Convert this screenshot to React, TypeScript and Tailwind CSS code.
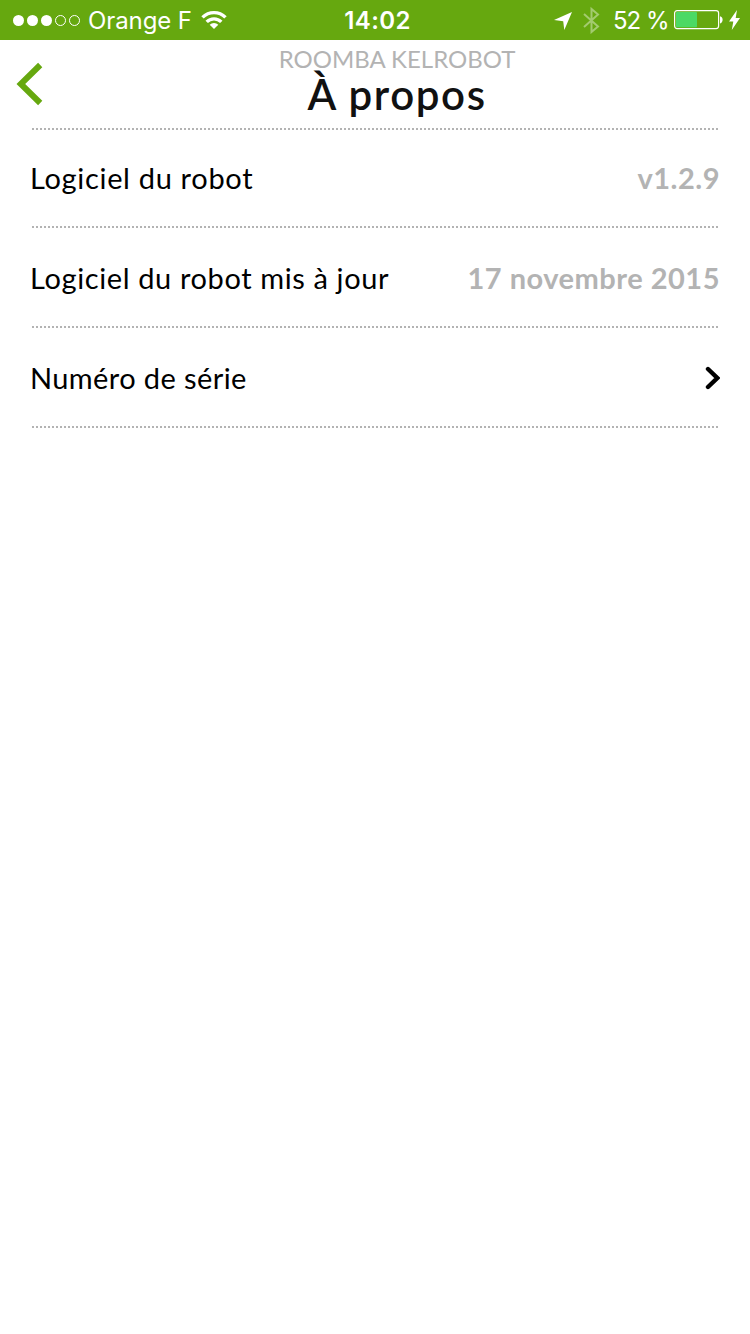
type Row = { label: string; labelClass: string; value?: string }

const rows: Row[] = [
  { label: 'Logiciel du robot', labelClass: 'tracking-[0.68px]', value: 'v1.2.9' },
  { label: 'Logiciel du robot mis à jour', labelClass: 'tracking-[0.62px]', value: '17 novembre 2015' },
  { label: 'Numéro de série', labelClass: 'tracking-[0.4px]' },
]

// 2px dots with 2px gaps; border-dotted would round them off
function Separator() {
  return (
    <div className="mx-8 h-0.5 bg-[repeating-linear-gradient(to_right,#b3b3b3_0px,#b3b3b3_2px,transparent_2px,transparent_4px)]" />
  )
}

function StatusBar() {
  return (
    <div className="grid h-10 grid-cols-[1fr_auto_1fr] items-center bg-[#66a80f] font-['Inter',sans-serif] text-2xl leading-9 whitespace-nowrap text-white">
      <div className="flex items-center pl-[13px]">
        <svg width="67" height="12" viewBox="0 0 67 12" fill="currentColor">
          <circle cx="5.5" cy="6.5" r="5.5" />
          <circle cx="19.5" cy="6.5" r="5.5" />
          <circle cx="33.5" cy="6.5" r="5.5" />
          <circle cx="47.5" cy="6.5" r="5" fill="none" stroke="currentColor" />
          <circle cx="61.5" cy="6.5" r="5" fill="none" stroke="currentColor" />
        </svg>
        <span className="ml-2 w-[104px] pt-0.5 tracking-[-0.1px]">Orange F</span>
        <svg className="ml-[9px]" width="26" height="20" viewBox="0 0 26 20" fill="none" stroke="currentColor" strokeWidth="3.4">
          <path d="M1.5 7.4a16.3 16.3 0 0 1 23 0" />
          <path d="M5.7 11.9a10.3 10.3 0 0 1 14.6 0" />
          <path d="M13 19l-4.300-4.200a6 6 0 0 1 8.600 0z" fill="currentColor" stroke="none" />
        </svg>
      </div>
      <span className="pt-0.5 pl-[5px] font-semibold tracking-[0.4px]">14:02</span>
      <div className="flex items-center justify-end pr-2.5">
        <svg className="mt-0.5" width="18" height="18" viewBox="0 0 18 18" fill="currentColor">
          <path d="M18 0L10.300 18 9.200 9.200 0 7.900z" />
        </svg>
        <svg className="ml-[11px] opacity-40" width="17" height="28" viewBox="0 0 17 28" fill="none" stroke="currentColor" strokeWidth="2">
          <path d="M1 8l14 12.500-6.500 5.500V3L15 8.500 1 21" />
        </svg>
        <span className="ml-[13px] w-14 pt-0.5 tracking-[-1px]">52 %</span>
        <svg className="ml-[5px]" width="49" height="20" viewBox="0 0 49 20">
          <rect x="0.6" y="0.6" width="44" height="18" rx="2.5" fill="none" stroke="currentColor" strokeWidth="1.2" />
          <rect x="2" y="2" width="21" height="15.2" rx="1" fill="#4cd964" />
          <path d="M46 6.200c3.500.5 3.500 6.700 0 7.200z" fill="currentColor" />
        </svg>
        <svg className="ml-1.5" width="11" height="20" viewBox="0 0 11 20" fill="currentColor">
          <path d="M8 0L0 11.500h4.300L2.800 20 11 8H6.700z" />
        </svg>
      </div>
    </div>
  )
}

function Header() {
  return (
    <header className="flex h-22">
      <button type="button" aria-label="Retour" className="w-11 pl-4">
        <svg width="28" height="44" viewBox="0 0 28 44" fill="none" stroke="#66a80f" strokeWidth="6">
          <path d="M24.200 3L4.800 22l19.400 19" />
        </svg>
      </button>
      <div className="flex-1 pt-px text-center">
        <div className="text-2xl leading-9 text-[#b3b3b3]">ROOMBA KELROBOT</div>
        <h1 className="-mt-1 text-[42px] leading-[42px] font-semibold tracking-[1.6px] text-[#111]">À propos</h1>
      </div>
    </header>
  )
}

export default function App() {
  return (
    <div className="min-h-screen bg-white font-['Lato',sans-serif]">
      <StatusBar />
      <Header />
      <Separator />
      {rows.map((row, i) => (
        <div key={row.label}>
          <div
            className={`flex items-center justify-between px-[30px] text-[29px] leading-9 whitespace-nowrap ${i === 0 ? 'h-24' : 'h-[98px] pt-0.5'}`}
          >
            <span className={`text-black ${row.labelClass}`}>{row.label}</span>
            {row.value ? (
              <span className="font-bold tracking-[0.5px] text-[#b3b3b3]">{row.value}</span>
            ) : (
              <svg width="15" height="24" viewBox="0 0 15 24" fill="none" stroke="black" strokeWidth="4.4" strokeLinecap="round">
                <path d="M3 3l9.300 9L3 21" />
              </svg>
            )}
          </div>
          <Separator />
        </div>
      ))}
    </div>
  )
}
